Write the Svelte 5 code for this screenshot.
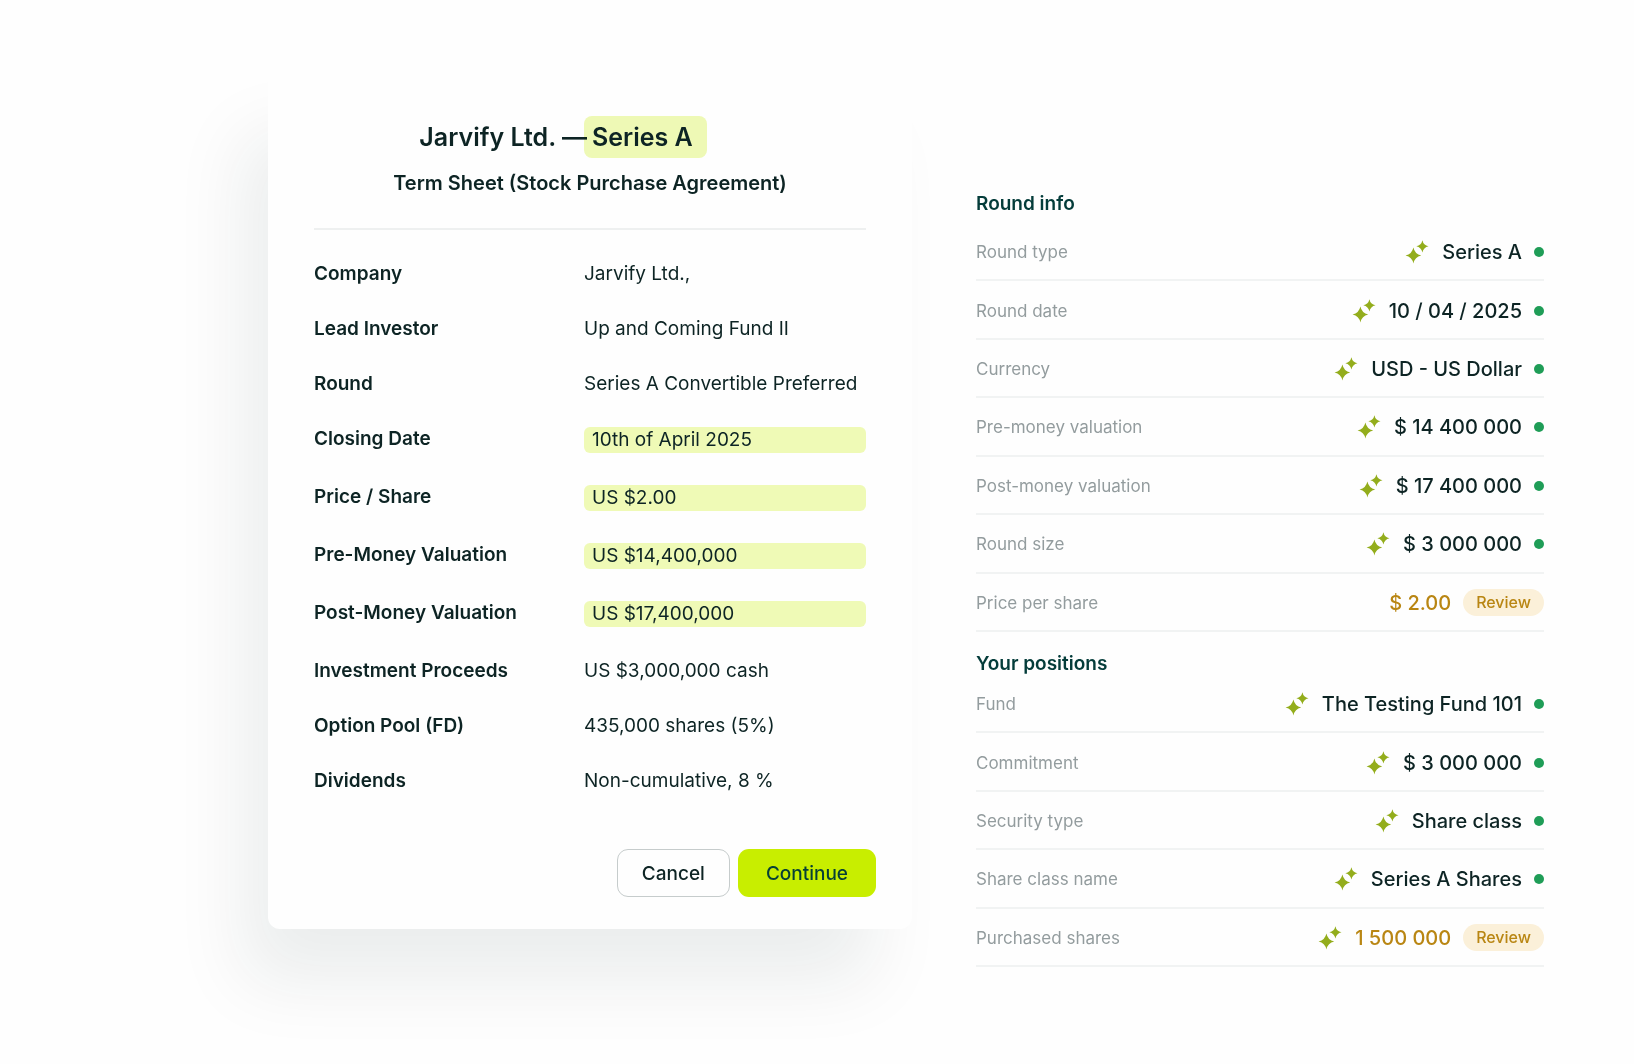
<script lang="ts">
  type Term = { label: string; value: string; marked?: boolean };
  type Field = { label: string; value: string; review?: boolean; ai?: boolean };

  const terms: Term[] = [
    { label: 'Company', value: 'Jarvify Ltd.,' },
    { label: 'Lead Investor', value: 'Up and Coming Fund II' },
    { label: 'Round', value: 'Series A Convertible Preferred' },
    { label: 'Closing Date', value: '10th of April 2025', marked: true },
    { label: 'Price / Share', value: 'US $2.00', marked: true },
    { label: 'Pre-Money Valuation', value: 'US $14,400,000', marked: true },
    { label: 'Post-Money Valuation', value: 'US $17,400,000', marked: true },
    { label: 'Investment Proceeds', value: 'US $3,000,000 cash' },
    { label: 'Option Pool (FD)', value: '435,000 shares (5%)' },
    { label: 'Dividends', value: 'Non-cumulative, 8 %' }
  ];

  const sections: { title: string; kind: string; fields: Field[] }[] = [
    {
      title: 'Round info',
      kind: 'round',
      fields: [
        { label: 'Round type', value: 'Series A', ai: true },
        { label: 'Round date', value: '10 / 04 / 2025', ai: true },
        { label: 'Currency', value: 'USD - US Dollar', ai: true },
        { label: 'Pre-money valuation', value: '$ 14 400 000', ai: true },
        { label: 'Post-money valuation', value: '$ 17 400 000', ai: true },
        { label: 'Round size', value: '$ 3 000 000', ai: true },
        { label: 'Price per share', value: '$ 2.00', review: true }
      ]
    },
    {
      title: 'Your positions',
      kind: 'positions',
      fields: [
        { label: 'Fund', value: 'The Testing Fund 101', ai: true },
        { label: 'Commitment', value: '$ 3 000 000', ai: true },
        { label: 'Security type', value: 'Share class', ai: true },
        { label: 'Share class name', value: 'Series A Shares', ai: true },
        { label: 'Purchased shares', value: '1 500 000', ai: true, review: true }
      ]
    }
  ];
</script>

<main class="page">
  <article class="card">
    <header class="head">
      <h1>Jarvify Ltd. —<mark>Series A</mark></h1>
      <p>Term Sheet (Stock Purchase Agreement)</p>
    </header>
    <dl class="terms">
      {#each terms as term}
        <div class="term" class:marked={term.marked}>
          <dt>{term.label}</dt>
          <dd>{term.value}</dd>
        </div>
      {/each}
    </dl>
    <footer class="actions">
      <button type="button" class="cancel">Cancel</button>
      <button type="button" class="continue">Continue</button>
    </footer>
  </article>

  <aside class="panel">
    {#each sections as section}
      <section>
        <h2>{section.title}</h2>
        <dl class="fields {section.kind}">
          {#each section.fields as field}
            <div class="field" class:review={field.review}>
              <dt>{field.label}</dt>
              <dd>
                {#if field.ai}
                  <svg class="spark" viewBox="0 0 24 24" aria-hidden="true">
                    <path d="M8.4 7.4Q9.8 14 16.2 15.4Q9.8 16.8 8.4 23.4Q7 16.8 .6 15.4Q7 14 8.4 7.4Z" />
                    <path d="M17.4 .2Q18.4 5.2 23.5 6.3Q18.4 7.4 17.4 12.6Q16.4 7.4 11.3 6.3Q16.4 5.2 17.4 .2Z" />
                  </svg>
                {/if}
                <span>{field.value}</span>
                {#if field.review}
                  <span class="badge">Review</span>
                {:else}
                  <i class="dot"></i>
                {/if}
              </dd>
            </div>
          {/each}
        </dl>
      </section>
    {/each}
  </aside>
</main>

<style>
  :global(body) {
    margin: 0;
    background: #fefefe;
  }
  .page {
    box-sizing: border-box;
    min-height: 100vh;
    display: grid;
    grid-template-columns: minmax(0, 644fr) minmax(0, 568fr);
    align-items: start;
    gap: 64px;
    padding: 68px 90px 96px 268px;
    font-family: Inter, 'Liberation Sans', sans-serif;
    color: #0d2424;
  }
  h1, h2, p, dl, dd {
    margin: 0;
  }
  .card {
    padding: 48px 36px 32px 46px;
    border-radius: 12px;
    background: #fefefe;
    box-shadow: -32px 60px 72px -8px rgba(16, 40, 36, 0.08);
  }
  .head {
    margin-right: 10px;
    padding-bottom: 32px;
    border-bottom: 2px solid #eef0f0;
    text-align: center;
  }
  h1 {
    padding-right: 54px;
    font-size: 25px;
    line-height: 42px;
    font-weight: 600;
    white-space: nowrap;
  }
  mark {
    display: inline-block;
    margin-left: -3px;
    padding: 0 14px 0 8px;
    border-radius: 8px;
    background: #effab6;
    color: inherit;
    mix-blend-mode: multiply;
  }
  p {
    margin-top: 12px;
    font-size: 20px;
    line-height: 26px;
    font-weight: 600;
  }
  .terms {
    display: grid;
    gap: 31px;
    margin: 32px 10px 0 0;
    font-size: 19px;
    line-height: 24px;
  }
  .term {
    display: grid;
    grid-template-columns: 270px minmax(0, 1fr);
    align-items: start;
  }
  dt {
    font-weight: 600;
  }
  .marked dd {
    margin-bottom: 1px;
    padding: 1px 8px;
    border-radius: 6px;
    background: #effab6;
  }
  .actions {
    display: flex;
    justify-content: flex-end;
    gap: 8px;
    margin-top: 56px;
  }
  button {
    height: 48px;
    border-radius: 11px;
    font: 500 19px/24px Inter, 'Liberation Sans', sans-serif;
    color: #0d2424;
  }
  .cancel {
    padding: 1px 24px 0;
    border: 1px solid #c6cccc;
    background: #fefefe;
  }
  .continue {
    padding: 1px 28px 0;
    border: 0;
    background: #c8ee00;
    color: #063f36;
  }
  .panel {
    padding-top: 125px;
  }
  h2 {
    font-size: 19px;
    line-height: 22px;
    font-weight: 600;
    color: #043c3a;
  }
  .fields {
    display: grid;
    grid-auto-rows: 1fr;
  }
  .round {
    min-height: 409px;
    margin: 8px 0 21px;
  }
  .positions {
    min-height: 292px;
  }
  .field {
    display: flex;
    align-items: center;
    justify-content: space-between;
    padding-top: 2px;
    border-bottom: 2px solid #f1f3f3;
  }
  .field dt {
    font-size: 17px;
    font-weight: 400;
    color: #939c9e;
  }
  .field dd {
    display: flex;
    align-items: center;
    gap: 12px;
    font-size: 20px;
    line-height: 26px;
    font-weight: 500;
  }
  .spark {
    width: 24px;
    height: 24px;
    margin-right: 1px;
    fill: #93ad1c;
  }
  .dot {
    width: 10px;
    height: 10px;
    border-radius: 50%;
    background: #1f9d57;
  }
  .review dd {
    color: #b98613;
  }
  .badge {
    padding: 0 13px;
    border-radius: 14px;
    background: #fbf0d9;
    font-size: 16px;
    line-height: 27px;
  }
</style>
